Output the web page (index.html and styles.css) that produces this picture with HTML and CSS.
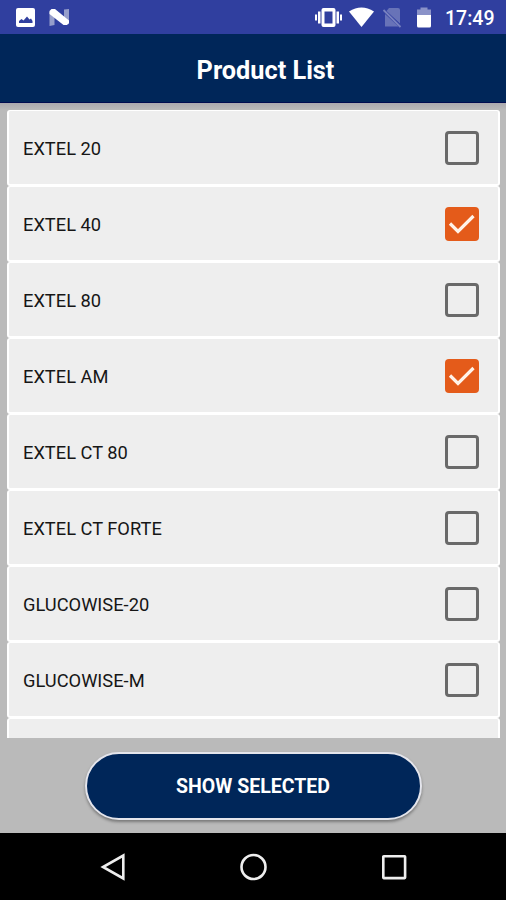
FILE: index.html
```html
<!DOCTYPE html>
<html lang="en">
<head>
<meta charset="utf-8">
<title>Product List</title>
<link rel="stylesheet" href="styles.css">
</head>
<body>
<div class="screen">
  <div class="status">
    <svg class="status-left" width="60" height="34" viewBox="0 0 60 34">
      <rect x="1" y="8" width="19" height="19" rx="2" fill="#fff"/>
      <path d="M4 23v-2l2.500-2 2 1.500 3.500-4 2.500 3 1.500-1 1.500 2.500v2z" fill="#303f9f"/>
      <path d="M34.500 12v14l5-1V9zM49 9.500v9l5 6V9z" fill="#969ecb"/>
      <path d="M36.500 9h3.500L54 20.500V23l-2 2h-3.500L34.500 14v-3z" fill="#fff"/>
    </svg>
    <svg class="status-icons" width="122" height="34" viewBox="0 0 122 34">
      <path d="M0 14.500h2v6H0zM25 14.500h2v6h-2zM3 11.500h2.500v12H3zM21.500 11.500H24v12h-2.500z" fill="#fff"/>
      <path fill-rule="evenodd" d="M8.500 8h10a2 2 0 0 1 2 2v15a2 2 0 0 1-2 2h-10a2 2 0 0 1-2-2V10a2 2 0 0 1 2-2zM9.500 11.500v12h8v-12z" fill="#fff"/>
      <path d="M34 11.500Q46.500 3.500 59 11.500L46.500 27z" fill="#fff"/>
      <path d="M74 8h9a2 2 0 0 1 2 2v13.500L71.500 11zM70 14l13.500 12.500H70z" fill="#6873b8"/>
      <path d="M68.500 10L85.500 27" stroke="#7882c0" stroke-width="1.800"/>
      <path d="M102 15V9.500h3.500v-2h7v2h3.500V15z" fill="#8a92c8"/>
      <path d="M102 15h14v11a1.500 1.500 0 0 1-1.500 1.500h-11A1.500 1.500 0 0 1 102 26z" fill="#fff"/>
    </svg>
    <span class="clock">17:49</span>
  </div>
  <header class="header"><h1 class="title">Product List</h1></header>
  <main class="content">
    <ul class="list">
      <li class="row"><span class="name">EXTEL 20</span><span class="box"></span></li>
      <li class="row"><span class="name">EXTEL 40</span><span class="box checked"><svg width="34" height="34" viewBox="0 0 34 34"><path d="M5 16.500L13 24.500L28.500 9"/></svg></span></li>
      <li class="row"><span class="name">EXTEL 80</span><span class="box"></span></li>
      <li class="row"><span class="name">EXTEL AM</span><span class="box checked"><svg width="34" height="34" viewBox="0 0 34 34"><path d="M5 16.500L13 24.500L28.500 9"/></svg></span></li>
      <li class="row"><span class="name">EXTEL CT 80</span><span class="box"></span></li>
      <li class="row"><span class="name">EXTEL CT FORTE</span><span class="box"></span></li>
      <li class="row"><span class="name">GLUCOWISE-20</span><span class="box"></span></li>
      <li class="row"><span class="name">GLUCOWISE-M</span><span class="box"></span></li>
      <li class="row"></li>
    </ul>
  </main>
  <div class="actions"><button class="show">SHOW SELECTED</button></div>
  <nav class="nav">
    <svg width="28" height="30" viewBox="0 0 28 30"><path d="M24.300 3.500v23L4 15z"/></svg>
    <svg width="28" height="30" viewBox="0 0 28 30"><circle cx="13.500" cy="15" r="12"/></svg>
    <svg width="28" height="30" viewBox="0 0 28 30"><rect x="3.300" y="4.300" width="21.800" height="21.800" rx=".5"/></svg>
  </nav>
</div>
</body>
</html>
```
FILE: styles.css
```css
* { box-sizing: border-box; }
body { margin: 0; font-family: Roboto, "Liberation Sans", sans-serif; }
.screen {
  width: 506px;
  height: 900px;
  display: flex;
  flex-direction: column;
  background: #bababa;
  overflow: hidden;
}
.status {
  flex: none;
  height: 34px;
  display: flex;
  align-items: center;
  padding: 0 11px 0 15px;
  background: #303f9f;
}
.status-icons { margin-left: auto; margin-right: 8px; }
.clock {
  width: 50px;
  color: #fff;
  font-size: 19.500px;
  font-weight: 500;
  line-height: 34px;
  white-space: nowrap;
  padding-top: 3px;
}
.header {
  flex: none;
  height: 69px;
  display: flex;
  align-items: center;
  justify-content: center;
  padding: 6px 0 0 25px;
  background: #002659;
  border-bottom: 1px solid #000c50;
}
.title { margin: 0; color: #fff; font-size: 25.300px; font-weight: 700; line-height: 30px; }
.content {
  flex: none;
  height: 634.500px;
  padding: 7px 6px 0 7px;
  overflow: hidden;
  background: linear-gradient(#aaa9ae, #bababa 7px);
}
.list { height: 627.500px; margin: 0; padding: 0; list-style: none; overflow: hidden; }
.row {
  height: 76px;
  display: flex;
  align-items: center;
  justify-content: space-between;
  padding: 0 19px 0 14px;
  background: #eee;
  border: 2px solid #fff;
  border-top-width: 1px;
  border-radius: 3px;
}
.name { font-size: 18.300px; color: #161616; line-height: 24px; padding-top: 2px; }
.box {
  width: 34px;
  height: 34px;
  border: 3px solid #696969;
  border-radius: 4px;
}
.checked { border: 0; background: #e45b1a; }
.checked svg { display: block; fill: none; stroke: #fff3e9; stroke-width: 3.200; }
.actions {
  flex: 1;
  display: flex;
  justify-content: center;
  align-items: flex-start;
  padding-top: 14px;
}
.show {
  width: 337px;
  height: 68px;
  padding: 2px 0 0;
  color: #fff;
  background: #002659;
  border: 2px solid #e4e5ec;
  border-radius: 34px;
  box-shadow: 0 2px 3px rgba(0, 0, 0, .35);
  font: 700 19.500px Roboto, "Liberation Sans", sans-serif;
}
.nav {
  flex: none;
  height: 67px;
  display: flex;
  align-items: center;
  justify-content: space-between;
  padding: 0 98px 0 99px;
  background: #000;
}
.nav svg { fill: none; stroke: #eee; stroke-width: 2.600; }
```
